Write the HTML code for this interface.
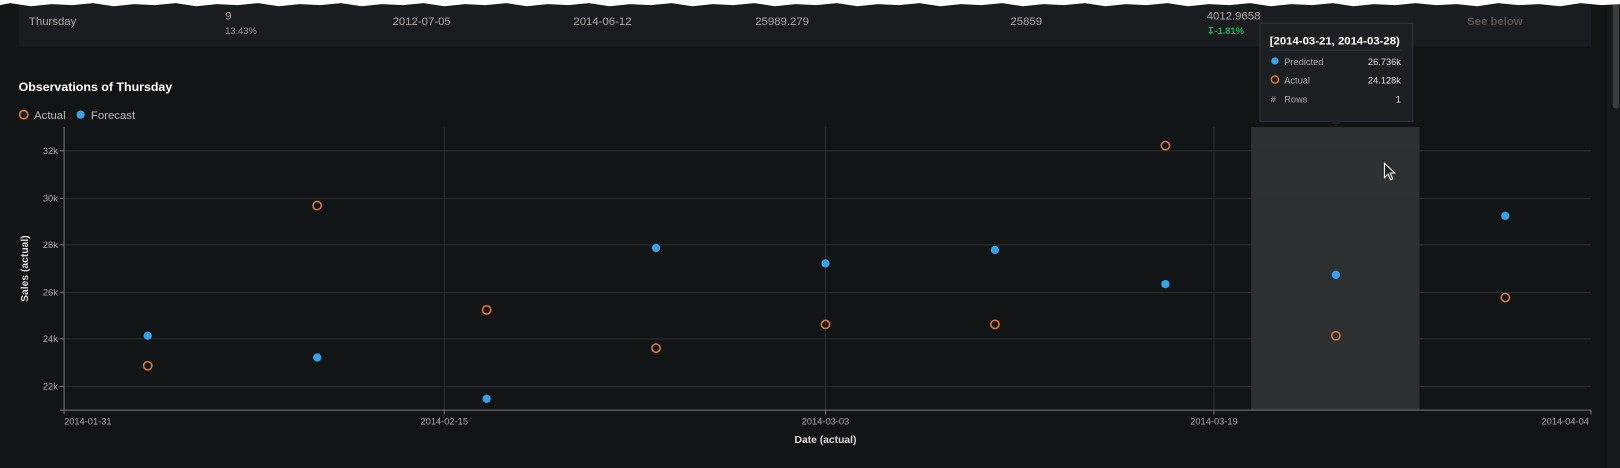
<!DOCTYPE html>
<html><head><meta charset="utf-8"><style>
html,body{margin:0;padding:0;background:#111516;overflow:hidden;width:1620px;height:468px}
#w{position:absolute;left:0;top:0;width:1568px;height:453px;transform:scale(1.03316,1.03311);transform-origin:0 0;font-family:"Liberation Sans",sans-serif;color:#ccc}
.t{position:absolute;font-size:11px;white-space:nowrap}
</style></head><body><div id="w">
<div style="position:absolute;left:18px;top:0;width:1522px;height:45px;background:#1a1d1f"></div>
<div style="position:absolute;left:1555px;top:0;width:13px;height:453px;background:#16191a"></div>
<div style="position:absolute;left:1561px;top:0;width:6px;height:105px;background:#3a3d3f;border-radius:3px"></div>
<svg style="position:absolute;left:0;top:0" width="1568" height="10"><path fill="#fff" d="M0 0H1568V4 L1550 5 1530 3 1510 6 1490 4 1470 5 1450 3 1430 6 1410 4 1390 5 1370 3 1350 5 1330 4 1310 6 1290 3 1270 5 1250 4 1230 6 1210 3 1190 5 1170 4 1150 6 1130 3 1110 5 1090 4 1070 6 1050 3 1030 5 1010 4 990 6 970 3 950 5 930 4 910 6 890 3 870 5 850 4 830 6 810 3 790 5 770 4 750 6 730 3 710 5 690 4 670 6 650 3 630 5 610 4 590 6 570 3 550 5 530 4 510 6 490 3 470 5 450 4 430 6 410 3 390 5 370 4 350 6 330 3 310 5 290 4 270 6 250 3 230 5 210 4 190 6 170 3 150 5 130 4 110 6 90 3 70 5 50 4 30 6 10 3 0 5Z"/></svg>
<div class="t" style="left:28px;top:15px;color:#aaa">Thursday</div>
<div class="t" style="left:218px;top:10px;color:#aaa">9</div>
<div class="t" style="left:218px;top:25px;font-size:9px;color:#999">13.43%</div>
<div class="t" style="left:380px;top:15px;color:#aaa">2012-07-05</div>
<div class="t" style="left:555px;top:15px;color:#aaa">2014-06-12</div>
<div class="t" style="left:731px;top:15px;color:#aaa">25989.279</div>
<div class="t" style="left:978px;top:15px;color:#aaa">25859</div>
<div class="t" style="left:1168px;top:10px;color:#aaa">4012.9658</div>
<div class="t" style="left:1168px;top:25px;font-size:9px;color:#1fb45a;font-weight:bold">↧-1.81%</div>
<div class="t" style="left:1420px;top:15px;color:#555;font-weight:bold">See below</div>
<div class="t" style="left:18px;top:77px;font-size:12px;color:#fff;font-weight:bold">Observations of Thursday</div>
<svg style="position:absolute;left:0;top:0" width="1568" height="453" font-family="Liberation Sans, sans-serif">
<circle cx="23" cy="111" r="4" fill="none" stroke="#e8782f" stroke-width="1.6"/>
<text x="33" y="115" font-size="11" fill="#bbb">Actual</text>
<circle cx="78" cy="111" r="4" fill="#36a2ea"/>
<text x="88" y="115" font-size="11" fill="#bbb">Forecast</text>
<rect x="1211" y="123" width="163" height="274" fill="#2e3132"/>
<g stroke="#2c3031" stroke-width="1">
<line x1="46" x2="1540" y1="146" y2="146"/><line x1="46" x2="1540" y1="192" y2="192"/><line x1="46" x2="1540" y1="237" y2="237"/><line x1="46" x2="1540" y1="283" y2="283"/><line x1="46" x2="1540" y1="328" y2="328"/><line x1="46" x2="1540" y1="374" y2="374"/>
<line x1="430" x2="430" y1="123" y2="397"/><line x1="799" x2="799" y1="123" y2="397"/><line x1="1175" x2="1175" y1="123" y2="397"/>
</g>
<g stroke="#777"><line x1="62" x2="62" y1="123" y2="401"/><line x1="58" x2="1540" y1="397" y2="397"/>
<line x1="58" x2="62" y1="146" y2="146"/><line x1="58" x2="62" y1="192" y2="192"/><line x1="58" x2="62" y1="237" y2="237"/><line x1="58" x2="62" y1="283" y2="283"/><line x1="58" x2="62" y1="328" y2="328"/><line x1="58" x2="62" y1="374" y2="374"/>
<line x1="430" x2="430" y1="397" y2="401"/><line x1="799" x2="799" y1="397" y2="401"/><line x1="1175" x2="1175" y1="397" y2="401"/><line x1="1540" x2="1540" y1="397" y2="401"/></g>
<g font-size="9" fill="#aaa" text-anchor="end"><text x="56" y="149">32k</text><text x="56" y="195">30k</text><text x="56" y="240">28k</text><text x="56" y="286">26k</text><text x="56" y="331">24k</text><text x="56" y="377">22k</text></g>
<g font-size="9" fill="#aaa" text-anchor="middle"><text x="85" y="411">2014-01-31</text><text x="430" y="411">2014-02-15</text><text x="799" y="411">2014-03-03</text><text x="1175" y="411">2014-03-19</text><text x="1515" y="411">2014-04-04</text></g>
<text x="799" y="429" font-size="10" font-weight="bold" fill="#ddd" text-anchor="middle">Date (actual)</text>
<text transform="translate(27,260) rotate(-90)" font-size="10" font-weight="bold" fill="#ddd" text-anchor="middle">Sales (actual)</text>
<g fill="#36a2ea"><circle cx="143" cy="325" r="4"/><circle cx="307" cy="346" r="4"/><circle cx="471" cy="386" r="4"/><circle cx="635" cy="240" r="4"/><circle cx="799" cy="255" r="4"/><circle cx="963" cy="242" r="4"/><circle cx="1128" cy="275" r="4"/><circle cx="1293" cy="266" r="4"/><circle cx="1457" cy="209" r="4"/></g>
<g fill="none" stroke="#e8782f" stroke-width="1.5"><circle cx="143" cy="354" r="4"/><circle cx="307" cy="199" r="4"/><circle cx="471" cy="300" r="4"/><circle cx="635" cy="337" r="4"/><circle cx="799" cy="314" r="4"/><circle cx="963" cy="314" r="4"/><circle cx="1128" cy="141" r="4"/><circle cx="1293" cy="325" r="4"/><circle cx="1457" cy="288" r="4"/></g>
<rect x="1219.5" y="22.5" width="148" height="95" fill="#1c2023" stroke="#33373a"/>
<path d="M1287 117.5 L1293 122 L1299 117.5Z" fill="#1c2023"/>
<text x="1229" y="43" font-size="11" font-weight="bold" fill="#fff">[2014-03-21, 2014-03-28)</text>
<line x1="1229" x2="1357" y1="48.5" y2="48.5" stroke="#33373a"/>
<circle cx="1234" cy="59" r="3.5" fill="#36a2ea"/><text x="1243" y="63" font-size="9" fill="#aaa">Predicted</text><text x="1356" y="63" font-size="9" fill="#ddd" text-anchor="end">26.736k</text>
<circle cx="1234" cy="77" r="3.5" fill="none" stroke="#e8782f" stroke-width="1.3"/><text x="1243" y="81" font-size="9" fill="#aaa">Actual</text><text x="1356" y="81" font-size="9" fill="#ddd" text-anchor="end">24.128k</text>
<text x="1230" y="99" font-size="9" fill="#aaa">#</text><text x="1243" y="99" font-size="9" fill="#aaa">Rows</text><text x="1356" y="99" font-size="9" fill="#ddd" text-anchor="end">1</text>
<path d="M1340 158 L1340 172 L1343.5 168.5 L1346 174 L1348 173 L1345.5 167.5 L1350 167.5Z" fill="#222" stroke="#fff" stroke-width="1"/>
</svg>
</div></body></html>
